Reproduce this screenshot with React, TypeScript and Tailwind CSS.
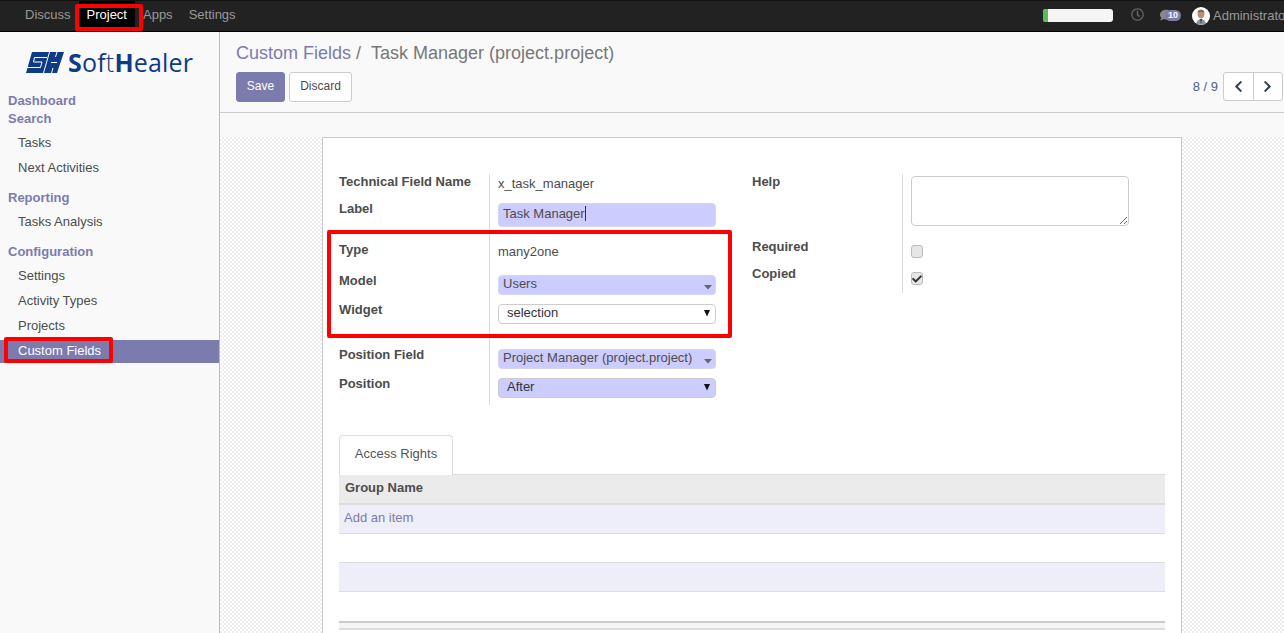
import type { ReactNode } from "react";
import { FaCheck, FaChevronLeft, FaChevronRight, FaComment, FaRegClock } from "react-icons/fa";

const topMenu = ["Discuss", "Project", "Apps", "Settings"];

function Logo() {
  return (
    <div className="flex h-[60px] items-center pl-[26px] pt-[1px]">
      <svg width="38" height="21" viewBox="0 0 38 21" className="shrink-0">
        <polygon points="6,0 38,0 31,21 0,21" fill="#0f3a86" />
        <path d="M1 15.5 H14.5 L16 10 H7.5 L8.5 5.5 H21 M23.5 0 L17.5 21 M25 10.5 H31 M31 0 L29.5 5 M27 16 L25.5 21" fill="none" stroke="#ffffff" strokeWidth="1" />
      </svg>
      <div className="ml-[4px] text-[25px] leading-none tracking-[0.2px] text-[#0f3a86] font-['Open_Sans',sans-serif]">
        <span className="font-bold">S</span>of<span className="font-light">t</span><span className="font-bold">H</span>ealer
      </div>
    </div>
  );
}

function SideHeading({ children, className = "" }: { children: ReactNode; className?: string }) {
  return <div className={`h-[18px] pl-2 text-[13px] leading-[18px] font-bold text-[#7c7bad] ${className}`}>{children}</div>;
}

function SideItem({ label, active }: { label: string; active?: boolean }) {
  if (active) {
    return (
      <div className="relative mt-[3px] h-[23px] bg-[#7c7bad] pl-[18px] text-[13px] leading-[21px] text-white">
        {label}
        <div className="absolute left-[4px] top-[-3px] h-[26px] w-[109px] rounded-[2px] border-[4px] border-[#ff0000]" />
      </div>
    );
  }
  return <div className="mt-[2px] h-[23px] pl-[18px] text-[13px] leading-[23px] text-[#4c4c4c]">{label}</div>;
}

function Sidebar() {
  return (
    <aside className="w-[220px] shrink-0 border-r border-[#bbbbbb] bg-[#f9f9f9]">
      <Logo />
      <SideHeading>Dashboard</SideHeading>
      <SideHeading>Search</SideHeading>
      <div className="mt-[3px]">
        <SideItem label="Tasks" />
        <SideItem label="Next Activities" />
      </div>
      <SideHeading className="mt-[10px]">Reporting</SideHeading>
      <div className="mt-[3px]">
        <SideItem label="Tasks Analysis" />
      </div>
      <SideHeading className="mt-[10px]">Configuration</SideHeading>
      <div className="mt-[3px]">
        <SideItem label="Settings" />
        <SideItem label="Activity Types" />
        <SideItem label="Projects" />
        <SideItem label="Custom Fields" active />
      </div>
    </aside>
  );
}

function Row({ label, height, children }: { label: string; height: string; children?: ReactNode }) {
  return (
    <div className={`grid grid-cols-[150px_1fr] ${height}`}>
      <div className="text-[13px] leading-[15px] font-bold text-[#4c4c4c]">{label}</div>
      <div className="border-l border-[#dddddd] pl-2 pt-[2px]">{children}</div>
    </div>
  );
}

function Many2one({ value }: { value: string }) {
  return (
    <div className="flex h-[20px] w-[218px] items-center justify-between rounded-[4px] border border-[#d5d5ee] bg-[#ccccff] pb-[2px] pl-1 pr-[3px] text-[13px] text-[#4c4c4c]">
      <span>{value}</span>
      <svg width="8" height="5" viewBox="0 0 8 5" className="mt-[6px]">
        <polygon points="0,0 8,0 4,4.5" fill="#666666" />
      </svg>
    </div>
  );
}

function NativeSelect({ value, filled }: { value: string; filled?: boolean }) {
  return (
    <div className="relative w-[218px]">
      <select
        defaultValue={value}
        className={`block h-[20px] w-full appearance-none rounded-[4px] border border-[#cccccc] pb-[3px] pl-2 text-[13px] leading-[15px] text-[#333333] ${filled ? "bg-[#ccccff]" : "bg-white"}`}
      >
        <option>{value}</option>
      </select>
      <svg width="6" height="7" viewBox="0 0 6 7" className="absolute right-[6px] top-[6px]">
        <polygon points="0,0 6,0 3,6.5" fill="#111111" />
      </svg>
    </div>
  );
}

function Checkbox({ checked }: { checked?: boolean }) {
  return (
    <div className="mt-[4px] flex h-[13px] w-[12px] items-center justify-center rounded-[3px] border border-[#bbbbbb] bg-[#e6e6e6]">
      {checked && <FaCheck className="h-[10px] w-[10px] text-[#333333]" />}
    </div>
  );
}

function FormGroups() {
  return (
    <div className="flex pl-[16px] pt-[36px]">
      <div className="w-[377px]">
        <Row label="Technical Field Name" height="h-[27px]">
          <div className="text-[13px] leading-[15px] text-[#4c4c4c]">x_task_manager</div>
        </Row>
        <Row label="Label" height="h-[41px]">
          <div className="flex h-[24px] w-[218px] items-center rounded-[4px] border border-[#d5d5ee] bg-[#ccccff] pb-[3px] pl-1 text-[13px] text-[#4c4c4c]">
            <span className="border-r border-[#333333] leading-[15px]">Task Manager</span>
          </div>
        </Row>
        <Row label="Type" height="h-[31px]">
          <div className="text-[13px] leading-[15px] text-[#4c4c4c]">many2one</div>
        </Row>
        <Row label="Model" height="h-[29px]">
          <Many2one value="Users" />
        </Row>
        <Row label="Widget" height="h-[45px]">
          <NativeSelect value="selection" />
        </Row>
        <Row label="Position Field" height="h-[29px]">
          <Many2one value="Project Manager (project.project)" />
        </Row>
        <Row label="Position" height="h-[29px]">
          <NativeSelect value="After" filled />
        </Row>
      </div>
      <div className="ml-[36px] w-[377px]">
        <Row label="Help" height="h-[65px]">
          <textarea className="block h-[50px] w-[218px] rounded-[4px] border border-[#cccccc] bg-white" />
        </Row>
        <Row label="Required" height="h-[27px]">
          <Checkbox />
        </Row>
        <Row label="Copied" height="h-[27px]">
          <Checkbox checked />
        </Row>
      </div>
    </div>
  );
}

function AccessRights() {
  return (
    <div className="mx-[16px] mt-[30px]">
      <div className="flex h-[40px] border-b border-[#dddddd]">
        <div className="relative -mb-px w-[114px] rounded-t-[4px] border border-b-0 border-[#dddddd] bg-white text-center text-[13px] leading-[35px] text-[#555555]">
          Access Rights
        </div>
      </div>
      <div className="h-[30px] border-b-2 border-[#dddddd] bg-[#ebebeb] pl-[6px] text-[13px] leading-[25px] font-bold text-[#4c4c4c]">Group Name</div>
      <div className="h-[29px] border-b border-[#dddddd] bg-[#eeeef8] pl-[5px] text-[13px] leading-[25px] text-[#7c7bad]">Add an item</div>
      <div className="h-[29px] border-b border-[#dddddd] bg-white" />
      <div className="h-[29px] border-b border-[#dddddd] bg-[#eeeef8]" />
      <div className="h-[29px] bg-white" />
      <div className="h-[9px] border-y-2 border-t-[#cccccc] border-b-[#dddddd] bg-[#f5f5f5]" />
    </div>
  );
}

function ControlPanel() {
  return (
    <div className="h-[81px] border-b border-[#cccccc] bg-[#f9f9f9] pl-[16px] pr-[1px]">
      <div className="h-[40px] pt-[9px] text-[18px] leading-[24px]">
        <span className="text-[#7c7bad]">Custom Fields</span>
        <span className="ml-[5px] text-[#777777]">/</span>
        <span className="ml-[10px] text-[#777777]">Task Manager (project.project)</span>
      </div>
      <div className="flex items-start justify-between">
        <div className="flex gap-[4px]">
          <button className="h-[30px] w-[49px] rounded-[3px] border border-[#7c7bad] bg-[#7c7bad] pb-[2px] text-[12px] text-white">Save</button>
          <button className="h-[30px] w-[63px] rounded-[3px] border border-[#cccccc] bg-white pb-[2px] text-[12px] text-[#4c4c4c]">Discard</button>
        </div>
        <div className="flex items-center">
          <span className="mr-[5px] text-[13px] text-[#4c5f8c]">8 / 9</span>
          <div className="flex h-[29px] w-[60px] rounded-[3px] border border-[#cccccc] bg-white text-[#333f55]">
            <div className="flex flex-1 items-center justify-center border-r border-[#cccccc]"><FaChevronLeft className="h-[13px] w-[13px]" /></div>
            <div className="flex flex-1 items-center justify-center"><FaChevronRight className="h-[13px] w-[13px]" /></div>
          </div>
        </div>
      </div>
    </div>
  );
}

function TopBar() {
  return (
    <header className="flex h-[32px] items-start border-t border-b border-t-[#111111] border-b-black bg-[#222222] text-[13px]">
      <nav className="flex pl-[17px]">
        {topMenu.map((item) => (
          <div key={item} className={`h-[27px] px-2 pt-[6px] leading-[15px] ${item === "Project" ? "bg-black text-white" : "text-[#999999]"}`}>
            {item}
          </div>
        ))}
      </nav>
      <div className="ml-auto flex w-[241px] shrink-0 items-center overflow-hidden pt-[5px]">
        <div className="flex h-[13px] w-[70px] shrink-0 overflow-hidden rounded-[3px] bg-[#f5f5f5]">
          <div className="w-[5px] bg-[#5cb85c]" />
        </div>
        <FaRegClock className="ml-[18px] mb-[3px] h-[13px] w-[13px] shrink-0 text-[#666666]" />
        <div className="relative ml-[16px] h-[14px] w-[21px] shrink-0">
          <FaComment className="absolute left-0 top-0 h-[12px] w-[12px] text-[#888888]" />
          <span className="absolute left-[5px] top-[1px] h-[11px] w-[16px] rounded-full bg-[#7c7bad] text-center text-[9px] leading-[11px] font-bold text-white">10</span>
        </div>
        <svg width="18" height="18" viewBox="0 0 18 18" className="ml-[11px] shrink-0">
          <circle cx="9" cy="9" r="9" fill="#ffffff" />
          <ellipse cx="9" cy="7" rx="3.4" ry="4.4" fill="#b98d78" />
          <path d="M5.5 5.5 C6 2.5 12 2.5 12.5 5.5 C11 4.5 7 4.5 5.5 5.5 Z" fill="#6b5a50" />
          <path d="M8 12 L10 12 L9.6 17.5 L8.4 17.5 Z" fill="#3a3a44" />
          <path d="M4 17 C4.5 13.5 6.5 13 8 12 L8.4 17.5 Z M14 17 C13.5 13.5 11.5 13 10 12 L9.6 17.5 Z" fill="#8a8f98" />
        </svg>
        <span className="ml-[3px] shrink-0 whitespace-nowrap text-[#999999]">Administrator</span>
      </div>
    </header>
  );
}

export default function App() {
  return (
    <div className="relative h-screen overflow-hidden bg-white font-['Liberation_Sans',Arial,sans-serif]">
      <TopBar />
      <div className="flex h-[601px]">
        <Sidebar />
        <main className="min-w-0 flex-1">
          <ControlPanel />
          <div className="h-[24px] bg-[#f9f9f9]" />
          <div className="h-[496px] bg-[repeating-conic-gradient(#eeeeee_0_25%,#ffffff_0_50%)] bg-[length:4px_4px]">
            <div className="mx-auto h-[520px] w-[860px] border border-[#c8c8d0] bg-white">
              <FormGroups />
              <AccessRights />
            </div>
          </div>
        </main>
      </div>
      <div className="absolute left-[75px] top-[4px] h-[27px] w-[68px] rounded-[2px] border-[4px] border-[#ff0000]" />
      <div className="absolute left-[327px] top-[230px] h-[108px] w-[405px] rounded-[2px] border-[4px] border-[#ff0000]" />
    </div>
  );
}
